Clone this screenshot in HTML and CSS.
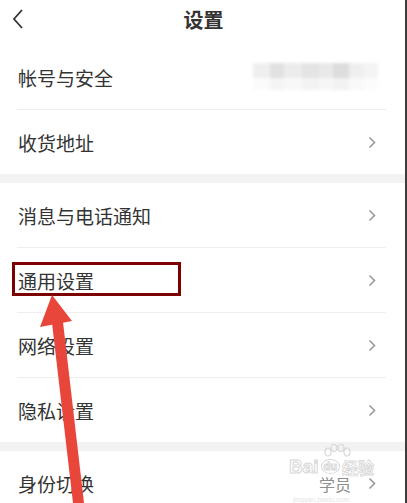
FILE: index.html
```html
<!DOCTYPE html>
<html lang="zh-CN">
<head>
<meta charset="utf-8">
<title>设置</title>
<link rel="stylesheet" href="styles.css">
</head>
<body>
<div class="page">
  <header class="nav">
    <svg class="back" width="14" height="22" viewBox="0 0 14 22"><path d="M11 2 L3 11 L11 20" fill="none" stroke="#333" stroke-width="1.8" stroke-linejoin="miter"/></svg>
    <h1 class="title">设置</h1>
  </header>

  <section class="group">
    <div class="row">
      <span class="label">帐号与安全</span>
      <span class="masked">
        <i class="m1"></i><i class="m2"></i><i class="m3"></i><i class="m4"></i><i class="m5"></i><i class="m6"></i><i class="m7"></i><i class="m8"></i>
        <i class="n1"></i><i class="n2"></i><i class="n3"></i><i class="n4"></i><i class="n5"></i><i class="n6"></i><i class="n7"></i><i class="n8"></i>
      </span>
    </div>
    <div class="row">
      <span class="label">收货地址</span>
      <svg class="chev" width="8" height="13" viewBox="0 0 8 13"><path d="M1.5 1.5 L6.5 6.5 L1.5 11.5" fill="none" stroke="#9a9a9a" stroke-width="1.6"/></svg>
    </div>
  </section>

  <div class="gap"></div>

  <section class="group">
    <div class="row">
      <span class="label">消息与电话通知</span>
      <svg class="chev" width="8" height="13" viewBox="0 0 8 13"><path d="M1.5 1.5 L6.5 6.5 L1.5 11.5" fill="none" stroke="#9a9a9a" stroke-width="1.6"/></svg>
    </div>
    <div class="row">
      <span class="label">通用设置</span>
      <svg class="chev" width="8" height="13" viewBox="0 0 8 13"><path d="M1.5 1.5 L6.5 6.5 L1.5 11.5" fill="none" stroke="#9a9a9a" stroke-width="1.6"/></svg>
    </div>
    <div class="row">
      <span class="label">网络设置</span>
      <svg class="chev" width="8" height="13" viewBox="0 0 8 13"><path d="M1.5 1.5 L6.5 6.5 L1.5 11.5" fill="none" stroke="#9a9a9a" stroke-width="1.6"/></svg>
    </div>
    <div class="row">
      <span class="label">隐私设置</span>
      <svg class="chev" width="8" height="13" viewBox="0 0 8 13"><path d="M1.5 1.5 L6.5 6.5 L1.5 11.5" fill="none" stroke="#9a9a9a" stroke-width="1.6"/></svg>
    </div>
  </section>

  <div class="gap"></div>

  <section class="group">
    <div class="row">
      <span class="label">身份切换</span>
      <span class="value">学员</span>
      <svg class="chev" width="8" height="13" viewBox="0 0 8 13"><path d="M1.5 1.5 L6.5 6.5 L1.5 11.5" fill="none" stroke="#9a9a9a" stroke-width="1.6"/></svg>
    </div>
  </section>

  <div class="highlight"></div>

  <svg class="arrow" width="407" height="503" viewBox="0 0 407 503">
    <polygon points="52,323 63,322 84,503 73,503" fill="#e9463b"/>
    <polygon points="52,295 72,321 40,327" fill="#e9463b"/>
  </svg>

  <div class="watermark">
    <svg class="paw" width="34" height="16" viewBox="0 0 34 16">
      <g fill="none" stroke="#d6d6d6" stroke-width="1.2">
        <ellipse cx="9" cy="8" rx="3" ry="4"/>
        <ellipse cx="15" cy="4" rx="3" ry="3.5"/>
        <ellipse cx="22" cy="4" rx="3" ry="3.5"/>
        <ellipse cx="28" cy="8" rx="3" ry="4"/>
      </g>
    </svg>
    <div class="wm-line"><span class="wm-bai">Bai</span><span class="wm-du">du</span><span class="wm-jy">经验</span></div>
  </div>
  <div class="wm-url">jingyan.baidu.com</div>
</div>
</body>
</html>
```

FILE: styles.css
```css
* { box-sizing: border-box; }
html, body { margin: 0; padding: 0; background: #fff; }
body {
  font-family: "Noto Sans CJK SC", "Noto Sans", sans-serif;
  color: #333;
}
.page {
  position: relative;
  width: 407px;
  height: 503px;
  overflow: hidden;
  border-right: 2px solid #3c3c3c;
  background: #fff;
}
.nav {
  height: 45px;
  display: flex;
  align-items: center;
  justify-content: center;
  position: relative;
}
.back {
  position: absolute;
  left: 11px;
  top: 8px;
}
.title {
  margin: 0;
  font-size: 20px;
  font-weight: 700;
  color: #333;
  line-height: 1;
  margin-top: -5px;
  margin-left: 2px;
}
.group { background: #fff; }
.row {
  height: 65px;
  margin-left: 17px;
  margin-right: 19px;
  padding-left: 1px;
  padding-right: 10px;
  display: flex;
  align-items: center;
  border-bottom: 1px solid #eeeeee;
  position: relative;
}
.group .row:last-child { border-bottom: none; height: 64px; }
.label {
  flex: 1;
  font-size: 19px;
  color: #333;
  line-height: 1;
}
.chev { flex: none; margin-top: 1px; }
.value {
  font-size: 16px;
  color: #8e8e8e;
  margin-right: 17px;
  line-height: 1;
  margin-top: 2px;
}
.gap { height: 9px; background: #f2f2f2; }

.masked {
  display: grid;
  grid-template-columns: 17px 14px 18px 17px 14px 16px 15px 14px;
  grid-template-rows: 15px 12px;
  margin-right: -2px;
  margin-top: -1px;
  filter: blur(1.5px);
}
.masked i { display: block; }
.m1 { background: #efefef; }
.m2 { background: #e1e1e1; }
.m3 { background: #ececec; }
.m4 { background: #e4e4e4; }
.m5 { background: #e9e9e9; }
.m6 { background: #dddddd; }
.m7 { background: #efefef; }
.m8 { background: #f4f4f4; }
.n1 { background: #fbfbfb; }
.n2 { background: #f4f4f4; }
.n3 { background: #f8f8f8; }
.n4 { background: #f3f3f3; }
.n5 { background: #f6f6f6; }
.n6 { background: #f2f2f2; }
.n7 { background: #f9f9f9; }
.n8 { background: #fcfcfc; }

.highlight {
  position: absolute;
  left: 12px;
  top: 262px;
  width: 169px;
  height: 34px;
  border: 3px solid #7d0000;
}
.arrow {
  position: absolute;
  left: 0;
  top: 0;
  pointer-events: none;
}
.watermark {
  position: absolute;
  left: 289px;
  top: 444px;
  width: 100px;
  color: transparent;
  font-family: "Liberation Sans", "Noto Sans CJK SC", sans-serif;
}
.paw { display: block; margin-left: 30px; }
.wm-line { display: flex; align-items: center; line-height: 1; margin-top: -2px; height: 17px; }
.wm-bai, .wm-du, .wm-jy {
  -webkit-text-stroke: 1px #d8d8d8;
  font-weight: 700;
  line-height: 1;
}
.wm-bai { font-size: 19px; }
.wm-du {
  font-size: 11px;
  border: 1.2px solid #d8d8d8;
  border-radius: 50%;
  padding: 1px 2px;
  margin: 0 2px;
}
.wm-jy { font-size: 16px; -webkit-text-stroke: 0.8px #d8d8d8; font-family: "Noto Sans CJK SC", sans-serif; }
.wm-url {
  position: absolute;
  left: 293px;
  top: 496px;
  font-family: "Liberation Sans", sans-serif;
  font-size: 7px;
  line-height: 1;
  color: #e6e6e6;
}
```
